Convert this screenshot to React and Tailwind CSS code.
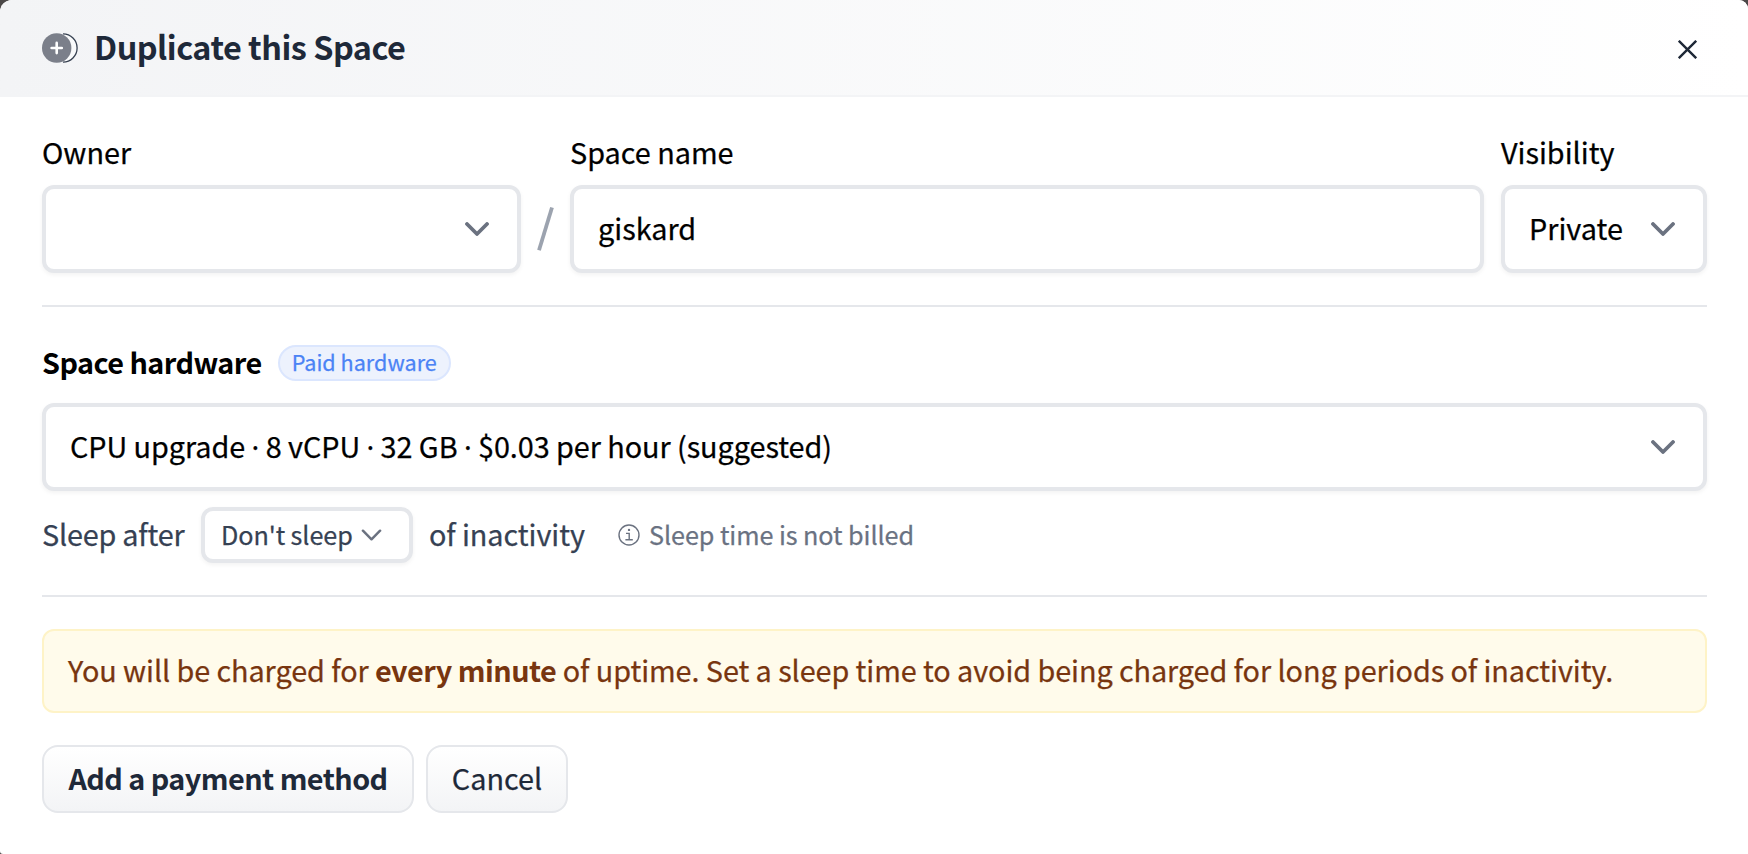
function Chevron({ className, thin }) {
  return (
    <svg className={className} viewBox="0 0 24 14" fill="none" stroke="#6b7280" strokeWidth={thin ? 2.9 : 3.8} strokeLinecap="round" strokeLinejoin="round">
      <path d="M2 2L12 12L22 2" />
    </svg>
  );
}

function DuplicateIcon() {
  return (
    <svg className="h-[30px] w-[37px] shrink-0" viewBox="0 0 37 30" fill="none">
      <path d="M21 0.9A14.1 14.1 0 0 1 21 29.1" fill="#f9fafb" stroke="#374151" strokeWidth="1.3" />
      <circle cx="14.7" cy="15" r="14.7" fill="#7b7f8a" />
      <path d="M14.7 9.9V20.1M9.6 15H19.8" stroke="#fff" strokeWidth="2.6" strokeLinecap="round" />
    </svg>
  );
}

function InfoIcon() {
  return (
    <svg className="h-[22px] w-[22px] shrink-0" viewBox="0 0 22 22" fill="none" stroke="#6b7280" strokeWidth="1.4">
      <circle cx="11" cy="11" r="10" />
      <path d="M8 9.4H11.2V15.8M7.4 15.8H14.8" />
      <circle cx="11" cy="5.9" r="1.2" fill="#6b7280" stroke="none" />
    </svg>
  );
}

const Dot = () => <span className="font-['Noto_Sans',sans-serif]">·</span>;

const box = "flex items-center border-4 border-gray-200 bg-white shadow-[0_2px_4px_rgba(0,0,0,0.05)]";

export default function App() {
  return (
    <div className="h-[854px] w-[1748px] overflow-hidden bg-[#4b4848] font-['Noto_Sans_CJK_SC',sans-serif] text-[28.8px] leading-[48px] text-black [-webkit-text-stroke:0.25px]">
      <div className="flex h-full flex-col overflow-hidden rounded-tl-[12px] rounded-tr-[9px] rounded-bl-[3px] bg-white">
        <header className="flex h-[97px] shrink-0 items-center border-b-2 border-[#f3f4f6] bg-gradient-to-r from-[#f3f4f6] to-white pr-[51px] pl-[42px]">
          <DuplicateIcon />
          <h1 className="ml-[15px] pb-[3px] text-[32.4px] font-bold tracking-[-0.5px] text-gray-800 [-webkit-text-stroke:0]">Duplicate this Space</h1>
          <svg className="mt-[4px] ml-auto h-[19px] w-[19px]" viewBox="0 0 19 19" stroke="#1f2937" strokeWidth="2.4">
            <path d="M0.8 0.8L18.2 18.2M18.2 0.8L0.8 18.2" />
          </svg>
        </header>

        <main className="flex flex-col px-[42px] pt-[31px]">
          <div className="flex w-[1665px] items-end">
            <label className="flex w-[479px] flex-col gap-[9px]">
              <span>Owner</span>
              <span className={`${box} h-[88px] justify-end rounded-xl pr-[28px]`}>
                <Chevron className="h-[14px] w-6" />
              </span>
            </label>
            <svg className="mx-[16px] mb-[21px] h-[46px] w-[17px]" viewBox="0 0 17 46" stroke="#9ca3af" strokeWidth="3.8">
              <path d="M2 44.2L15 1.5" />
            </svg>
            <label className="flex w-[914px] flex-col gap-[9px]">
              <span>Space name</span>
              <span className={`${box} h-[88px] rounded-xl pl-6`}>
                <span className="pb-[3px]">giskard</span>
              </span>
            </label>
            <label className="ml-[17px] flex flex-1 flex-col gap-[9px]">
              <span>Visibility</span>
              <span className={`${box} h-[88px] justify-between rounded-xl pr-[28px] pl-6`}>
                <span className="pb-[3px]">Private</span>
                <Chevron className="h-[14px] w-6" />
              </span>
            </label>
          </div>

          <hr className="mt-8 w-[1665px] border-t-2 border-gray-200" />

          <div className="mt-8 flex h-12 items-center">
            <h2 className="pb-[3px] font-bold tracking-[-0.55px] [-webkit-text-stroke:0]">Space hardware</h2>
            <span className="ml-[16px] flex h-9 w-[173px] items-center justify-center rounded-full border-2 border-[#dbe6fe] bg-[#edf2fd] text-[21.6px] leading-[30px] whitespace-nowrap text-[#4b83f5]">
              <span className="pb-[3px]">Paid hardware</span>
            </span>
          </div>
          <div className={`${box} mt-4 h-[88px] w-[1665px] justify-between rounded-xl pr-[28px] pl-6`}>
            <span className="pb-[1px] tracking-[-0.055px] whitespace-pre">
              CPU upgrade <Dot /> 8 vCPU <Dot /> 32 GB <Dot /> $0.03 per hour (suggested)
            </span>
            <Chevron className="h-[14px] w-6" />
          </div>
          <div className="mt-4 flex h-14 items-center text-gray-700">
            <span className="w-[143px] pb-[3px] tracking-[-0.2px] whitespace-nowrap">Sleep after</span>
            <span className={`${box} ml-4 h-14 w-[212px] rounded-xl pl-4 text-[25.2px]`}>
              <span className="pb-[3px] tracking-[-0.08px] whitespace-nowrap">Don't sleep</span>
              <Chevron thin className="ml-2 h-3 w-[21px]" />
            </span>
            <span className="ml-4 w-[157px] pb-[3px] tracking-[-0.08px] whitespace-nowrap">of inactivity</span>
            <span className="ml-[32px] flex items-center gap-[9px] text-[25.2px] text-gray-500">
              <InfoIcon />
              <span className="pb-[3px] tracking-[-0.07px]">Sleep time is not billed</span>
            </span>
          </div>

          <hr className="mt-8 w-[1665px] border-t-2 border-gray-200" />

          <div className="mt-8 flex h-[84px] w-[1665px] items-center rounded-xl border-2 border-[#fef3c7] bg-[#fffbeb] px-6 text-[#78350f]">
            <p className="pb-[3px] tracking-[-0.075px] whitespace-nowrap">
              You will be charged for <strong className="font-bold tracking-[-0.5px] [-webkit-text-stroke:0]">every minute</strong> of uptime. Set a sleep time to avoid being charged for long periods of inactivity.
            </p>
          </div>

          <div className="mt-8 flex gap-3 text-gray-800">
            <button className="flex h-[68px] w-[372px] items-center justify-center rounded-2xl border-2 border-gray-200 bg-gradient-to-b from-white to-gray-100">
              <span className="pb-[3px] font-bold tracking-[-0.55px] whitespace-nowrap [-webkit-text-stroke:0]">Add a payment method</span>
            </button>
            <button className="flex h-[68px] w-[142px] items-center justify-center rounded-2xl border-2 border-gray-200 bg-gradient-to-b from-white to-gray-100">
              <span className="pb-[3px]">Cancel</span>
            </button>
          </div>
        </main>
      </div>
    </div>
  );
}
